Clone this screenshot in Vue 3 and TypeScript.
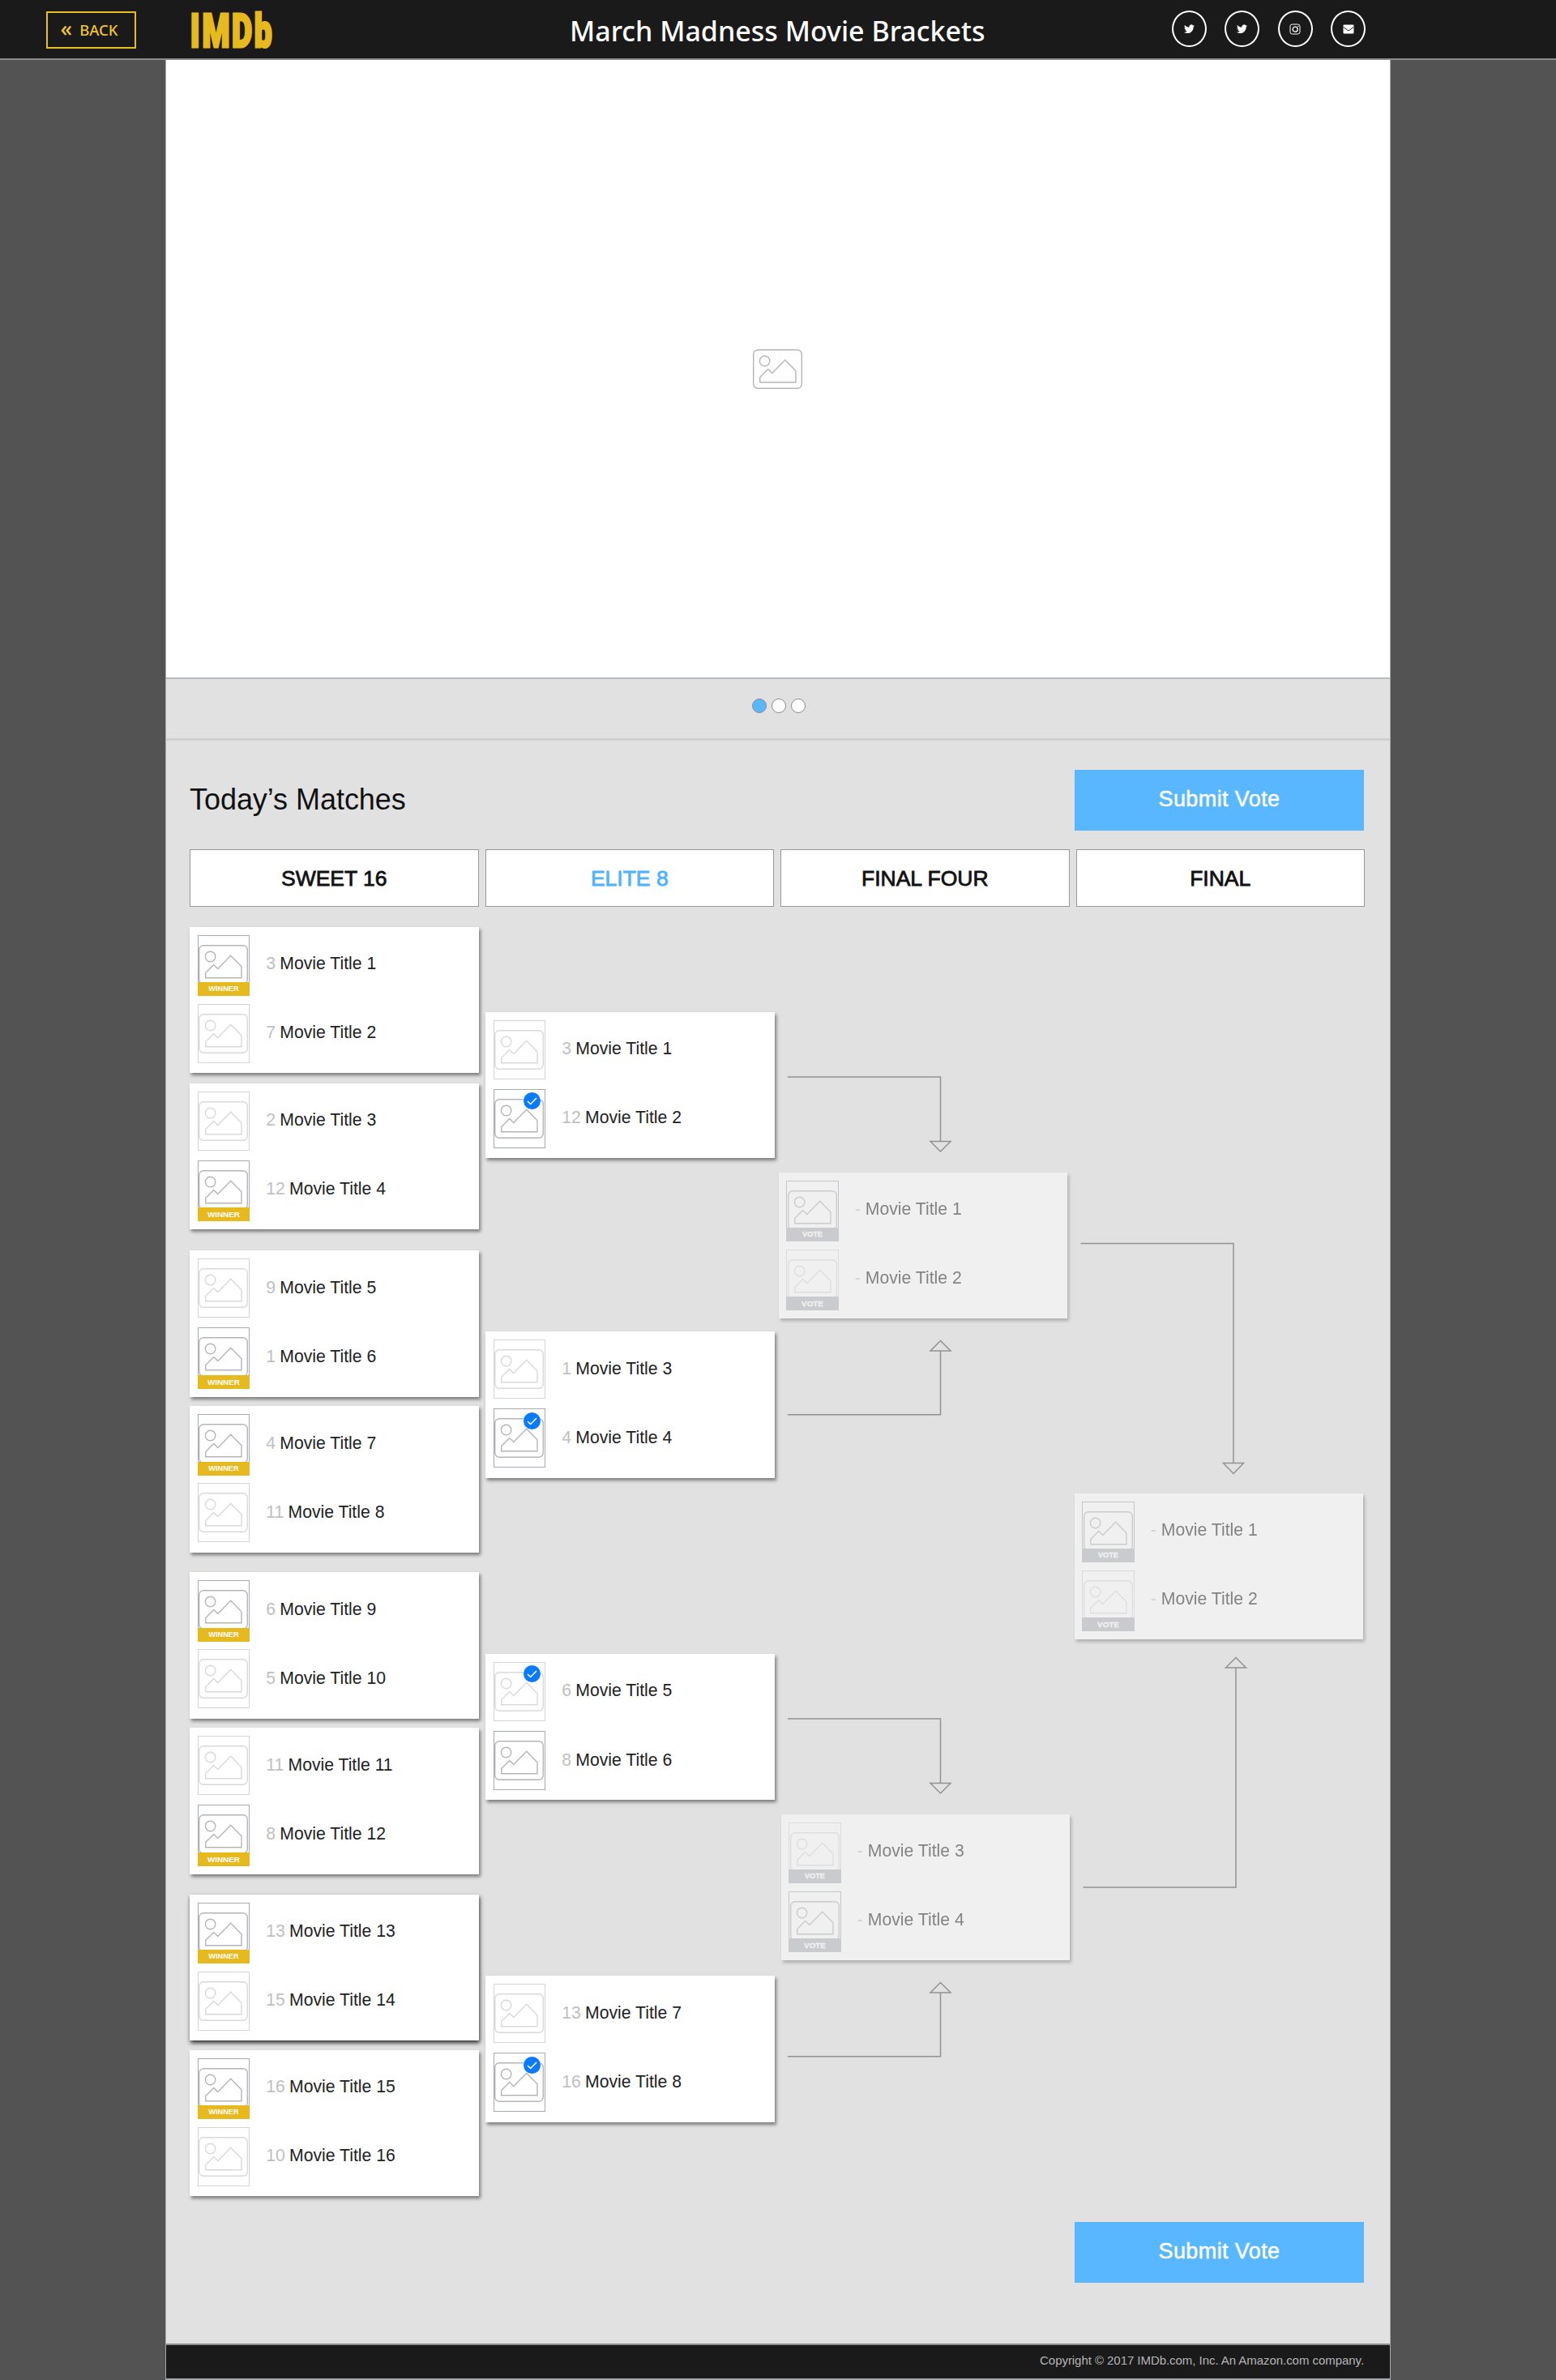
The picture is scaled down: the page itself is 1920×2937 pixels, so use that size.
<script setup lang="ts">
import { defineComponent, h } from 'vue'

interface Entry {
  seed: string
  title: string
  faint?: boolean
  label?: 'WINNER' | 'VOTE'
  picked?: boolean
}

interface Match {
  space: number
  shift?: number
  strong?: boolean
  entries: [Entry, Entry]
}

interface Round {
  name: string
  key: string
  pending?: boolean
  matches: Match[]
}

const won = (seed: string, title: string): Entry => ({ seed, title, label: 'WINNER' })
const lost = (seed: string, title: string): Entry => ({ seed, title, faint: true })
const open = (title: string, faint = false): Entry => ({ seed: '-', title, faint, label: 'VOTE' })

const rounds: Round[] = [
  {
    name: 'SWEET 16',
    key: 'sweet',
    matches: [
      { space: 24.5, entries: [won('3', 'Movie Title 1'), lost('7', 'Movie Title 2')] },
      { space: 12.5, entries: [lost('2', 'Movie Title 3'), won('12', 'Movie Title 4')] },
      { space: 26, entries: [lost('9', 'Movie Title 5'), won('1', 'Movie Title 6')] },
      { space: 11.5, entries: [won('4', 'Movie Title 7'), lost('11', 'Movie Title 8')] },
      { space: 24.5, entries: [won('6', 'Movie Title 9'), lost('5', 'Movie Title 10')] },
      { space: 11.5, entries: [lost('11', 'Movie Title 11'), won('8', 'Movie Title 12')] },
      { space: 25, strong: true, entries: [won('13', 'Movie Title 13'), lost('15', 'Movie Title 14')] },
      { space: 11.5, entries: [won('16', 'Movie Title 15'), lost('10', 'Movie Title 16')] },
    ],
  },
  {
    name: 'ELITE 8',
    key: 'elite',
    matches: [
      { space: 129.5, entries: [lost('3', 'Movie Title 1'), { seed: '12', title: 'Movie Title 2', picked: true }] },
      { space: 214.3, entries: [lost('1', 'Movie Title 3'), { seed: '4', title: 'Movie Title 4', picked: true }] },
      { space: 217, entries: [{ seed: '6', title: 'Movie Title 5', faint: true, picked: true }, { seed: '8', title: 'Movie Title 6' }] },
      { space: 217, entries: [lost('13', 'Movie Title 7'), { seed: '16', title: 'Movie Title 8', picked: true }] },
    ],
  },
  {
    name: 'FINAL FOUR',
    key: 'four',
    pending: true,
    matches: [
      { space: 327.5, entries: [open('Movie Title 1'), open('Movie Title 2', true)] },
      { space: 611.5, shift: 3, entries: [open('Movie Title 3', true), open('Movie Title 4')] },
    ],
  },
  {
    name: 'FINAL',
    key: 'final',
    pending: true,
    matches: [{ space: 723.5, entries: [open('Movie Title 1'), open('Movie Title 2', true)] }],
  },
]

const PictureIcon = defineComponent({
  name: 'PictureIcon',
  setup: () => () =>
    h('svg', { width: 61, height: 49, viewBox: '0 0 61 49', fill: 'none', stroke: '#b5b5b5', 'stroke-width': 1.4 }, [
      h('rect', { x: 0.7, y: 0.7, width: 59.6, height: 47.6, rx: 5.5 }),
      h('circle', { cx: 14.6, cy: 14.5, r: 6.2 }),
      h('path', { d: 'M8.7 40.8V34.6L18.7 24.4L23.8 29.4L39.7 13.3L53 26.8V40.8Z' }),
    ]),
})
</script>

<template>
  <div class="screen">
    <header class="topbar">
      <a class="back"><span class="chev">«</span><span>BACK</span></a>
      <svg class="logo" width="108" height="50" viewBox="0 0 108 50">
        <text transform="scale(.67 1)" x="1.2 23 77.6 119" y="44.8">IMDb</text>
      </svg>
      <h1>March Madness Movie Brackets</h1>
      <nav class="social">
        <span v-for="n in 2" :key="n" class="ring">
          <svg width="13" height="12" viewBox="0 0 24 21" fill="#fff">
            <path d="M24 2.5c-.9.4-1.8.7-2.8.8 1-.6 1.8-1.600 2.200-2.700-1 .6-2 1-3.100 1.200A4.900 4.900 0 0 0 11.900 6.300C7.800 6.100 4.200 4.100 1.700 1.100.4 3.300 1 6.200 3.200 7.700c-.8 0-1.600-.2-2.200-.6 0 2.300 1.600 4.400 3.900 4.900-.7.2-1.500.2-2.200.1.600 2 2.400 3.400 4.600 3.400A9.900 9.900 0 0 1 0 17.500 14 14 0 0 0 7.500 19.700c9.100 0 14.300-7.700 14-14.600 1-.7 1.800-1.600 2.500-2.600z" />
          </svg>
        </span>
        <span class="ring">
          <svg width="14" height="14" viewBox="0 0 14 14" fill="none" stroke="#fff">
            <rect x="1" y="1" width="12" height="12" rx="2.6" stroke-width="1" />
            <circle cx="7.200" cy="7.200" r="3" stroke-width="1.300" />
            <circle cx="10.800" cy="3.400" r=".7" fill="#fff" stroke="none" />
          </svg>
        </span>
        <span class="ring">
          <svg width="14" height="12" viewBox="0 0 14 12">
            <rect x=".5" y=".5" width="13" height="11" rx="1" fill="#fff" />
            <path d="M.5 3.200L5.600 7.100Q7 8 8.400 7.100L13.500 3.200" fill="none" stroke="#1a1a1a" />
          </svg>
        </span>
      </nav>
    </header>

    <main class="page">
      <section class="hero"><PictureIcon /></section>
      <div class="dots"><i class="on"></i><i></i><i></i></div>

      <section class="matches">
        <div class="heading">
          <h2>Today’s Matches</h2>
          <button class="submit" type="button">Submit Vote</button>
        </div>

        <div class="tabs">
          <div v-for="r in rounds" :key="r.key" class="tab" :class="{ active: r.key === 'elite' }">{{ r.name }}</div>
        </div>

        <div class="bracket">
          <div v-for="r in rounds" :key="r.key" class="round" :class="[r.key, { pending: r.pending }]">
            <article
              v-for="(m, i) in r.matches"
              :key="i"
              class="card"
              :class="{ strong: m.strong }"
              :style="{ marginTop: m.space + 'px', marginLeft: (m.shift ?? 0) + 'px' }"
            >
              <div v-for="e in m.entries" :key="e.title" class="entry">
                <div class="thumb">
                  <div class="frame" :class="{ faint: e.faint }"><PictureIcon /></div>
                  <span v-if="e.label" class="label" :class="e.label.toLowerCase()">{{ e.label }}</span>
                  <svg v-if="e.picked" class="check" width="21" height="21" viewBox="0 0 21 21">
                    <circle cx="10.500" cy="10.500" r="10.500" fill="#0a7aff" />
                    <path d="M5 11L8.700 14.500L16 7" fill="none" stroke="#fff" stroke-width="1.600" />
                  </svg>
                </div>
                <p class="name"><span class="seed">{{ e.seed }}</span><span>{{ e.title }}</span></p>
              </div>
            </article>
          </div>

          <svg class="lines" width="1510" height="1500" viewBox="205 1119 1510 1500">
            <path d="M972 1329H1160.500V1408.500M1148 1408.500H1173L1160.500 1421Z" />
            <path d="M972 1745.700H1160.500V1667M1148 1667H1173L1160.500 1654.500Z" />
            <path d="M1333.500 1534.500H1522V1805.500M1509.500 1805.500H1534.500L1522 1818.500Z" />
            <path d="M1336.500 2329H1525V2058M1512.500 2058H1537.500L1525 2045.500Z" />
            <path d="M972 2121H1160.500V2200.500M1148 2200.500H1173L1160.500 2213Z" />
            <path d="M972 2537.700H1160.500V2459M1148 2459H1173L1160.500 2446.500Z" />
          </svg>
        </div>

        <button class="submit bottom" type="button">Submit Vote</button>
      </section>

      <footer>Copyright © 2017 IMDb.com, Inc. An Amazon.com company.</footer>
    </main>
  </div>
</template>

<style>
body {
  background: #535353;
}
</style>

<style scoped>
* {
  box-sizing: border-box;
}
.screen {
  width: 1920px;
  height: 2937px;
  overflow: hidden;
  background: #535353;
  font-family: 'Liberation Sans', Arial, sans-serif;
}
.topbar {
  height: 74px;
  background: #1a1a1a;
  border-bottom: 2px solid #8b8d8f;
  display: flex;
  align-items: flex-start;
  font-family: 'Noto Sans', sans-serif;
}
.back {
  width: 111px;
  height: 46px;
  margin: 14px 0 0 57px;
  padding-right: 5px;
  border: 2px solid #e8bd20;
  color: #f0c52a;
  display: flex;
  align-items: center;
  justify-content: center;
  gap: 9px;
  font-size: 18.500px;
  font-weight: 500;
  line-height: 1;
}
.chev {
  font-size: 27px;
  margin-top: -6px;
}
.logo {
  margin: 13px 0 0 66px;
  overflow: visible;
}
.logo text {
  font: 900 58px Roboto, sans-serif;
  fill: #e6b91e;
  stroke: #e6b91e;
  stroke-width: 2.6px;
  vector-effect: non-scaling-stroke;
}
h1 {
  margin: 14px 0 0 361px;
  font-size: 34px;
  line-height: 48px;
  font-weight: 500;
  color: #fff;
  white-space: nowrap;
  width: 514px;
}
.social {
  display: flex;
  gap: 22.600px;
  margin: 13px 0 0 229px;
}
.ring {
  width: 42.800px;
  height: 45px;
  border: 2px solid #fff;
  border-radius: 50%;
  display: flex;
  align-items: center;
  justify-content: center;
}
.page {
  width: 1512px;
  margin: 0 auto;
  height: 2863px;
  background: #e1e1e1;
  border: solid #a4a7aa;
  border-width: 0 1px 2px;
  display: flex;
  flex-direction: column;
}
.hero {
  height: 764px;
  flex: none;
  background: #fff;
  border-bottom: 2px solid #b5bbc2;
  display: flex;
  align-items: center;
  justify-content: center;
  padding-right: 1px;
}
.dots {
  height: 76px;
  flex: none;
  border-bottom: 3px solid #cdd0cf;
  display: flex;
  justify-content: center;
  gap: 6px;
  padding: 24px 0 0 2px;
}
.dots i {
  width: 18px;
  height: 18px;
  border-radius: 50%;
  border: 1px solid #8d8d8d;
  background: #fff;
}
.dots .on {
  background: #59b7ff;
}
.matches {
  flex: 1;
  min-height: 0;
  padding: 35.500px 30px 0 29px;
  display: flex;
  flex-direction: column;
}
.heading {
  display: flex;
  justify-content: space-between;
  align-items: center;
  padding-right: 2px;
}
h2 {
  margin: 0;
  font-size: 36px;
  font-weight: 400;
  color: #111;
  letter-spacing: -0.05px;
}
.submit {
  width: 357px;
  height: 75px;
  flex: none;
  border: 0;
  padding: 0 0 2px;
  background: #59b7ff;
  color: #fff;
  font: 27px 'Liberation Sans', Arial, sans-serif;
  letter-spacing: 0.4px;
  -webkit-text-stroke: 0.5px #fff;
}
.tabs {
  margin-top: 23px;
  display: flex;
  gap: 8px;
  margin-right: -1px;
}
.tab {
  width: 356.500px;
  height: 71.500px;
  flex: none;
  border: 1.500px solid #999;
  background: #fff;
  color: #111;
  -webkit-text-stroke: 0.8px currentColor;
  font-size: 26.500px;
  line-height: 70px;
  text-align: center;
}
.active {
  color: #4db3ff;
}
.bracket {
  position: relative;
  height: 1623px;
  flex: none;
  display: flex;
}
.round {
  flex: none;
}
.sweet {
  width: 365px;
}
.elite {
  width: 361.500px;
}
.four {
  width: 365px;
}
.lines {
  position: absolute;
  left: -29px;
  top: 0;
  fill: none;
  stroke: #929292;
  stroke-width: 1.5;
  pointer-events: none;
}
.card {
  width: 356.500px;
  height: 180.500px;
  padding: 10px 0 0 9.700px;
  background: #fff;
  box-shadow: 2px 3px 4px rgba(0, 0, 0, 0.45);
}
.strong {
  box-shadow: 1px 3px 5px rgba(0, 0, 0, 0.8);
}
.pending .card {
  opacity: 0.5;
}
.entry {
  display: flex;
  height: 85.200px;
}
.thumb {
  position: relative;
  width: 64.500px;
  flex: none;
}
.frame {
  height: 73px;
  border: 1.300px solid #a5abb4;
  padding-top: 11px;
  display: flex;
  justify-content: center;
}
.frame svg {
  flex: none;
  display: block;
}
.faint {
  opacity: 0.5;
}
.label {
  position: absolute;
  left: 0;
  right: 0;
  top: 58.500px;
  height: 17px;
  line-height: 17px;
  text-align: center;
  font-size: 9.200px;
  font-weight: 700;
  color: #fff;
}
.entry + .entry .label {
  font-size: 9.800px;
}
.winner {
  background: #e6b91e;
}
.vote {
  background: #b3b5bb;
  -webkit-text-stroke: 0.3px #fff;
}
.check {
  position: absolute;
  left: 37.500px;
  top: 4.700px;
}
.name {
  margin: 23.700px 0 0 20px;
  display: flex;
  gap: 5.300px;
  font-size: 21.200px;
  line-height: 24px;
  color: #222;
  white-space: nowrap;
}
.seed {
  color: #c0c0c0;
}
.pending .name {
  gap: 6px;
}
.bottom {
  align-self: flex-end;
  margin-right: 2px;
}
footer {
  height: 43.500px;
  flex: none;
  border-top: 2px solid #8b8d8f;
  background: #1a1a1a;
  color: #b4b4b4;
  text-align: right;
  padding-right: 32px;
  font-size: 15px;
  letter-spacing: -0.05px;
  line-height: 38px;
}
</style>
